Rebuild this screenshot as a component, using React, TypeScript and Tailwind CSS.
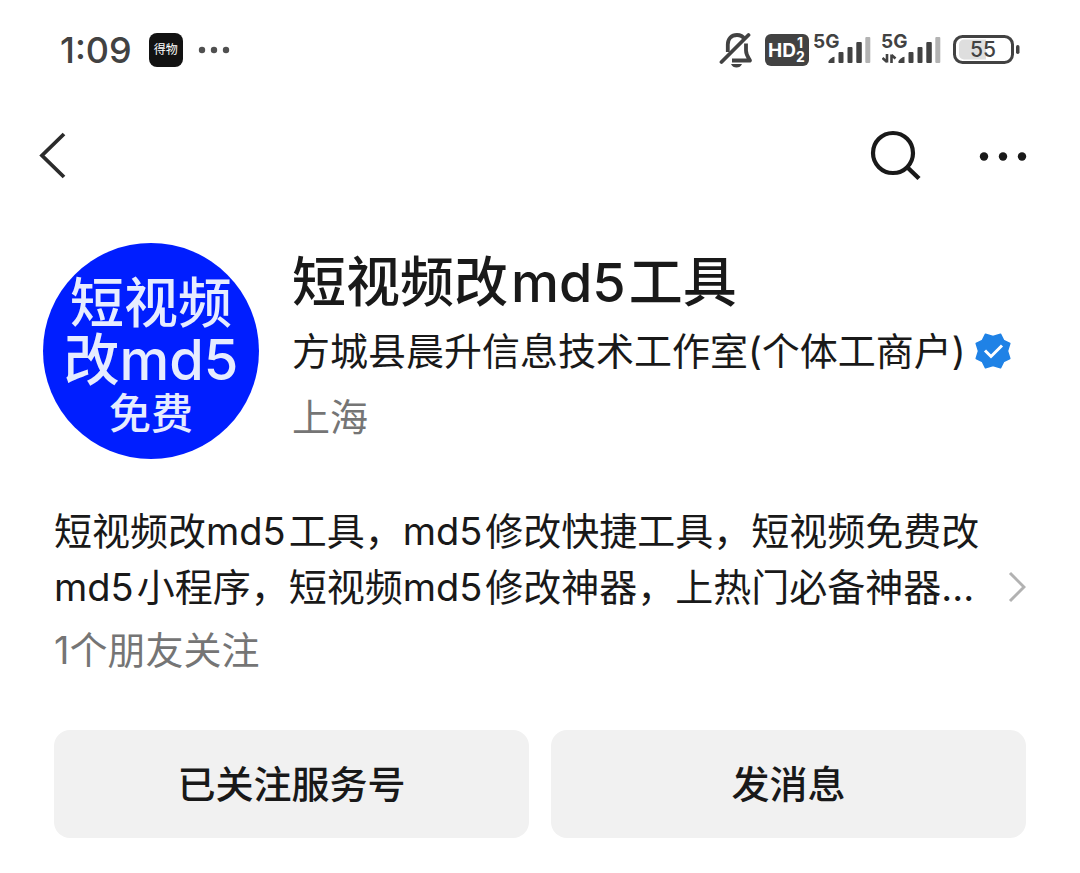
import React from "react";

function MutedBellIcon() {
  return (
    <svg width="36" height="40" viewBox="0 0 36 40" fill="none" aria-label="静音" role="img">
      <path
        d="M8.800 22V14.500C8.800 8.500 12.500 5 18 5C21.500 5 24 6.500 25.500 9M27 13.500V20.500C27 24.500 29 27 31 30.500H13"
        stroke="#424242"
        strokeWidth="3.800"
        strokeLinejoin="round"
      />
      <path d="M2.500 32L29.500 5" stroke="#424242" strokeWidth="3.800" strokeLinecap="round" />
      <path d="M12 34H23C22 36.500 20 37.500 17.500 37.500C15 37.500 13 36.500 12 34Z" fill="#424242" />
    </svg>
  );
}

function HdBadge() {
  return (
    <svg width="44" height="34" viewBox="0 0 44 34" role="img" aria-label="HD 1 2">
      <rect x="0" y="1" width="44" height="32" rx="6" fill="#424242" />
      <text x="3" y="23.500" fontSize="19" fontWeight="700" fill="#fff">HD</text>
      <text x="32" y="15" fontSize="14" fontWeight="700" fill="#fff">1</text>
      <text x="31" y="29" fontSize="14" fontWeight="700" fill="#fff">2</text>
    </svg>
  );
}

function Signal({ data }: { data?: boolean }) {
  const shift = data ? 2 : 0;
  return (
    <svg
      width={data ? 60 : 57}
      height="40"
      viewBox={data ? "0 0 60 40" : "0 0 57 40"}
      role="img"
      aria-label="5G"
    >
      <text x="-1" y="18" fontSize="19" fontWeight="700" fill="#424242">5G</text>
      {data && (
        <path
          d="M5 24V32.500M5 32L0.500 28M9.500 33V24.500M9.500 25L13.500 28.500"
          stroke="#424242"
          strokeWidth="2.600"
          fill="none"
        />
      )}
      <g transform={`translate(${shift} 2)`} fill="#424242">
        <path d="M14.500 29.500C15 27.500 18 25.200 20.500 24.800V31H14.500Z" />
        <rect x="24.500" y="20" width="5" height="11" rx="1" />
        <rect x="33.500" y="15" width="5" height="16" rx="1" />
        <rect x="42.300" y="10" width="5.500" height="21" rx="1" />
        <rect x="51.300" y="5" width="5" height="26" rx="1" fill="#b3b3b3" />
      </g>
    </svg>
  );
}

function Battery() {
  return (
    <svg width="68" height="32" viewBox="0 0 68 32" role="img" aria-label="电量 55">
      <rect x="1.500" y="2.500" width="58" height="26" rx="8" fill="#fff" stroke="#424242" strokeWidth="3" />
      <path d="M11 5.500H33V25.500H11A5 5 0 0 1 6 20.500V10.500A5 5 0 0 1 11 5.500Z" fill="#dedede" />
      <rect x="63" y="11" width="3.500" height="9" rx="1.700" fill="#424242" />
      <text x="30" y="23" fontSize="21" fontWeight="500" fill="#424242" textAnchor="middle">55</text>
    </svg>
  );
}

function StatusBar() {
  return (
    <div className="flex h-[100px] items-center justify-between pr-[59px] pl-[60px]">
      <div className="flex items-center">
        <span className="text-[36px] leading-none font-medium text-[#424242]">1:09</span>
        <span className="ml-[17px] flex size-[34px] items-center justify-center rounded-lg bg-[#121212] text-[12px] leading-none text-white">
          得物
        </span>
        <svg width="32" height="8" viewBox="0 0 32 8" fill="#505050" className="ml-[15px]" aria-hidden="true">
          <circle cx="4" cy="4" r="3.200" />
          <circle cx="16" cy="4" r="3.200" />
          <circle cx="28" cy="4" r="3.200" />
        </svg>
      </div>
      <div className="flex items-center">
        <MutedBellIcon />
        <div className="ml-[10px] flex"><HdBadge /></div>
        <div className="ml-[5px] flex"><Signal /></div>
        <div className="ml-[11px] flex"><Signal data /></div>
        <div className="ml-[11px] flex"><Battery /></div>
      </div>
    </div>
  );
}

function NavBar() {
  return (
    <nav className="flex h-[112px] items-center justify-between pr-[53px] pl-[38px]">
      <button type="button" aria-label="返回">
        <svg width="30" height="48" viewBox="0 0 30 48" fill="none">
          <path d="M26 2L4 23.500L26 45" stroke="#2b2b2b" strokeWidth="3.800" />
        </svg>
      </button>
      <div className="flex items-center gap-[58px]">
        <button type="button" aria-label="搜索">
          <svg width="52" height="52" viewBox="0 0 52 52" fill="none" stroke="#191919" strokeWidth="4.200">
            <circle cx="24" cy="23" r="20" />
            <path d="M38 37L50 48.500" strokeWidth="4.500" />
          </svg>
        </button>
        <button type="button" aria-label="更多">
          <svg width="48" height="10" viewBox="0 0 48 10" fill="#191919">
            <circle cx="5" cy="5.500" r="4.200" />
            <circle cx="24" cy="5.500" r="4.200" />
            <circle cx="43" cy="5.500" r="4.200" />
          </svg>
        </button>
      </div>
    </nav>
  );
}

function Avatar() {
  return (
    <div className="flex size-[216px] shrink-0 flex-col items-center rounded-full bg-[#001eff] pt-[33px] font-medium whitespace-nowrap text-[#e6ecff]">
      <span className="text-[54px] leading-[56px]">短视频</span>
      <span className="text-[56px] leading-[56px]">改md5</span>
      <span className="text-[42px] leading-[52px]">免费</span>
    </div>
  );
}

function VerifiedBadge() {
  return (
    <svg width="38" height="38" viewBox="0 0 38 38" role="img" aria-label="已认证" className="shrink-0">
      <path
        d="M19 4.500L26.500 2.200L29.600 8.400L35.800 11.500L33.500 19L35.800 26.500L29.600 29.600L26.500 35.800L19 33.500L11.500 35.800L8.400 29.600L2.200 26.500L4.500 19L2.200 11.500L8.400 8.400L11.500 2.200Z"
        fill="#1f82e6"
        stroke="#1f82e6"
        strokeWidth="1.500"
        strokeLinejoin="round"
      />
      <path d="M11 18.500L17 24.500L28 13.500" fill="none" stroke="#fff" strokeWidth="3" />
    </svg>
  );
}

function Md5() {
  return <span className="mr-[3px]">md5</span>;
}

export default function App() {
  return (
    <div className="min-h-screen bg-white font-['Inter','Noto_Sans_CJK_SC',sans-serif] text-[#191919]">
      <StatusBar />
      <NavBar />
      <main className="pt-[31px] pb-9">
        <header className="flex gap-[33px] pr-[60px] pl-[43px]">
          <Avatar />
          <div className="min-w-0 flex-1">
            <h1 className="mt-[4px] text-[54px] leading-[72px] font-medium">
              短视频改<span className="mx-[3px]">md5</span>工具
            </h1>
            <div className="flex items-center gap-[8px]">
              <p className="text-[38px] leading-[64px] whitespace-nowrap">方城县晨升信息技术工作室(个体工商户)</p>
              <VerifiedBadge />
            </div>
            <p className="text-[38px] leading-[68px] text-[#757575]">上海</p>
          </div>
        </header>
        <section className="mt-[44px] px-[54px]">
          <a href="#intro" className="flex items-end justify-between">
            <p className="min-w-0 flex-1 text-[38px] leading-[56px]">
              短视频改<Md5 />工具，<Md5 />修改快捷工具，短视频免费改<Md5 />小程序，短视频<Md5 />修改神器，上热门必备神器...
            </p>
            <svg width="20" height="56" viewBox="0 0 20 56" fill="none" className="ml-5 shrink-0" aria-hidden="true">
              <path d="M4 14L18 28L4 42" stroke="#b2b2b2" strokeWidth="3" />
            </svg>
          </a>
          <p className="mt-[7px] text-[38px] leading-[56px] text-[#757575]">1个朋友关注</p>
          <div className="mt-[52px] grid grid-cols-2 gap-[22px] text-[38px] font-medium">
            <button type="button" className="h-[108px] rounded-2xl bg-[#f1f1f1]">已关注服务号</button>
            <button type="button" className="h-[108px] rounded-2xl bg-[#f1f1f1]">发消息</button>
          </div>
        </section>
      </main>
    </div>
  );
}
